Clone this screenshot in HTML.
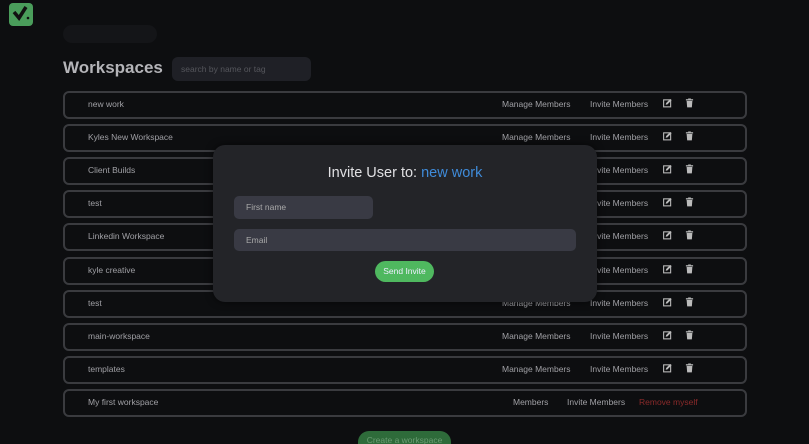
<!DOCTYPE html>
<html><head><meta charset="utf-8"><style>
*{box-sizing:border-box;margin:0;padding:0}
html{width:809px;height:444px;overflow:hidden}
body{width:809px;height:444px;overflow:hidden;background:#0d0e10;font-family:"Liberation Sans",sans-serif;position:relative;color:#a0a0a5}
.abs{position:absolute}
.row{position:absolute;left:63px;width:684px;height:28px;border:2px solid #3a3b3f;border-radius:6px;font-size:8.5px}
.row span{position:absolute;top:6px;white-space:nowrap}
.ic{position:absolute;top:5px;width:9px;height:10px}
</style></head><body>
<svg class="abs" style="left:9px;top:3px" width="24" height="23" viewBox="0 0 24 23"><rect width="24" height="23" rx="4" fill="#4a9d5b"/><path d="M5 9 L10 15 L17 4" stroke="#111" stroke-width="3.5" fill="none"/><circle cx="19" cy="15" r="1.3" fill="#111"/></svg>
<div class="abs" style="left:63px;top:25px;width:94px;height:18px;border-radius:9px;background:#141518"></div>
<div class="abs" style="left:63px;top:58px;font-size:17px;font-weight:bold;color:#b4b4b8">Workspaces</div>
<div class="abs" style="left:172px;top:57px;width:139px;height:24px;border-radius:6px;background:#1f2026;font-size:8.5px;color:#55565c;padding:7px 9px">search by name or tag</div>
<div id="rows"></div>
<div class="abs" style="left:358px;top:431px;width:93px;height:13px;overflow:hidden;border-radius:11px 11px 0 0;background:#2e6b3a;color:#6b9c73;font-size:8.5px;text-align:center;padding-top:4px">Create a workspace</div>
<div class="abs" style="left:213px;top:145px;width:384px;height:157px;border-radius:12px;background:#232428;box-shadow:0 0 8px rgba(0,0,0,.6)">
<div class="abs" style="left:0;width:384px;top:20px;text-align:center;font-size:14.5px;color:#e0e0e3">Invite User to: <span style="color:#3f8bd9">new work</span></div>
<div class="abs" style="left:21px;top:51px;width:139px;height:23px;border-radius:5px;background:#393a44;font-size:8.5px;color:#aaa;padding:6px 12px">First name</div>
<div class="abs" style="left:21px;top:84px;width:342px;height:22px;border-radius:5px;background:#393a44;font-size:8.5px;color:#aaa;padding:6px 12px">Email</div>
<div class="abs" style="left:162px;top:116px;width:59px;height:21px;border-radius:11px;background:#4fb85f;font-size:8.5px;color:#eef;text-align:center;padding-top:5px">Send Invite</div>
</div>
<script>
var n=["new work","Kyles New Workspace","Client Builds","test","Linkedin Workspace","kyle creative","test","main-workspace","templates","My first workspace"];
var h="";
var ed='<svg class="ic" style="left:598px" viewBox="0 0 10 10"><rect x="0.7" y="1.5" width="7.8" height="7.8" fill="none" stroke="#bbb" stroke-width="1.2"/><path d="M3 7 L3.5 5 L8 0.5 L9.5 2 L5 6.5Z" fill="#bbb"/></svg><svg class="ic" style="left:620px" viewBox="0 0 10 10"><rect x="1" y="0.8" width="8" height="1.4" fill="#bbb"/><rect x="3.5" y="0" width="3" height="1" fill="#bbb"/><path d="M1.8 2.8 H8.2 L7.6 9.8 H2.4Z" fill="#bbb"/></svg>';
for(var i=0;i<10;i++){var t=91+i*33.1;
h+='<div class="row" style="top:'+t+'px"><span style="left:23px">'+n[i]+'</span>';
if(i<9)h+='<span style="left:437px">Manage Members</span><span style="left:525px">Invite Members</span>'+ed;
else h+='<span style="left:448px">Members</span><span style="left:502px">Invite Members</span><span style="left:574px;color:#8a2a2a">Remove myself</span>';
h+='</div>';}
document.getElementById("rows").innerHTML=h;
</script>
</body></html>
